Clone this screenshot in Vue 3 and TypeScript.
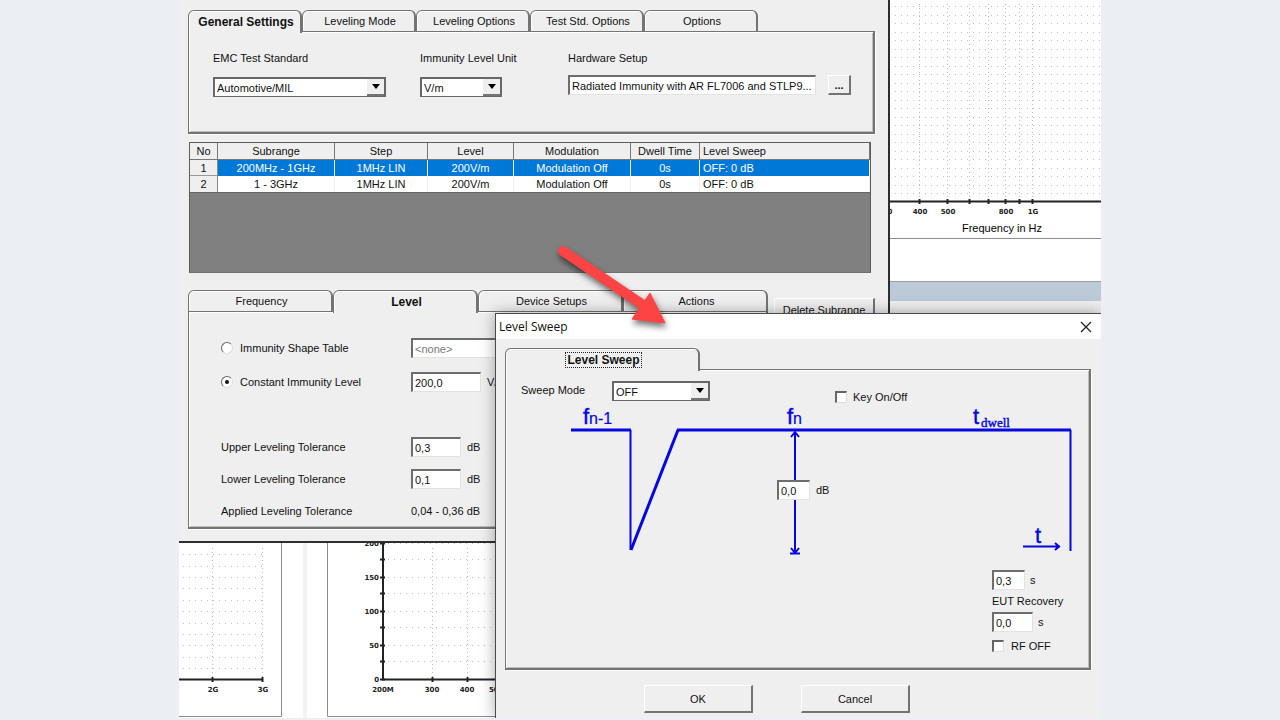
<script setup lang="ts">
import { ref } from 'vue'

const mainTabs: string[] = ['General Settings', 'Leveling Mode', 'Leveling Options', 'Test Std. Options', 'Options']
const rangeTabs: string[] = ['Frequency', 'Level', 'Device Setups', 'Actions']
const activeMain = ref('General Settings')
const activeRange = ref('Level')

const columns: string[] = ['No', 'Subrange', 'Step', 'Level', 'Modulation', 'Dwell Time', 'Level Sweep']
const subranges: string[][] = [
  ['1', '200MHz - 1GHz', '1MHz LIN', '200V/m', 'Modulation Off', '0s', 'OFF: 0 dB'],
  ['2', '1 - 3GHz', '1MHz LIN', '200V/m', 'Modulation Off', '0s', 'OFF: 0 dB'],
]
const selectedRow = ref(0)

const standard = ref('Automotive/MIL')
const unit = ref('V/m')
const hardware = ref('Radiated Immunity with AR FL7006 and STLP9...')
const levelSource = ref('constant')
const shapeTable = ref('<none>')
const level = ref('200,0')
const upper = ref('0,3')
const lower = ref('0,1')

const sweepMode = ref('OFF')
const keyOnOff = ref(false)
const sweepDepth = ref('0,0')
const rampTime = ref('0,3')
const recovery = ref('0,0')
const rfOff = ref(false)

const freqRows: number[] = Array.from({ length: 23 }, (_, i) => 6 + Math.round(i * 8.5))
const freqTicks: number[] = [30, 58, 80, 99, 116, 130, 143]
const freqLabels = [
  { x: 0, t: '0' },
  { x: 30, t: '400' },
  { x: 58, t: '500' },
  { x: 116, t: '800' },
  { x: 143, t: '1G' },
]
const leftRows: number[] = [11, 23, 34, 45, 57, 68, 80, 91, 102, 114, 125]
const fieldTicks: number[] = [0, 16, 34, 50, 68, 84, 102, 118, 136]
const fieldLabels = [
  { y: 3, t: '200' },
  { y: 37, t: '150' },
  { y: 71, t: '100' },
  { y: 105, t: '50' },
  { y: 139, t: '0' },
]
</script>

<template>
  <main class="page">
    <div class="desktop">
      <section class="backdrop">
        <div class="spectrum">
          <svg class="spectrum-chart" width="212" height="239">
            <g class="dots">
              <line v-for="y in freqRows" :key="y" x1="5" x2="212" :y1="y + 0.5" :y2="y + 0.5" stroke-dasharray="1 5" />
              <line v-for="x in freqTicks" :key="x" :x1="x - 0.5" :x2="x - 0.5" y1="4" y2="198" stroke-dasharray="1 3" />
            </g>
            <path class="axis" d="M0 201.5H212" />
            <path v-for="x in freqTicks" :key="x" class="axis" :d="`M${x - 0.5} 199V204`" />
            <text v-for="l in freqLabels" :key="l.t" class="tick" :x="l.x" y="214" text-anchor="middle">{{ l.t }}</text>
            <text class="axis-title" x="112" y="232" text-anchor="middle">Frequency in Hz</text>
            <path class="rule" d="M0 238.5H212" />
          </svg>
          <div class="blank"></div>
          <div class="band"></div>
        </div>
        <div class="plots">
          <svg width="104" height="175">
            <g class="dots">
              <line v-for="y in leftRows" :key="y" x1="4" x2="84" :y1="y + 0.5" :y2="y + 0.5" stroke-dasharray="1 5" />
              <line v-for="x in [33, 83]" :key="x" :x1="x + 0.5" :x2="x + 0.5" y1="5" y2="134" stroke-dasharray="1 3" />
            </g>
            <path class="axis" d="M0 136.5H84M33.5 134V139M83.5 134V139" />
            <text class="tick" x="34" y="149" text-anchor="middle">2G</text>
            <text class="tick" x="84" y="149" text-anchor="middle">3G</text>
            <path class="rule" d="M0 173.5H102.5V0" />
          </svg>
          <div class="gutter"></div>
          <svg width="169" height="175">
            <path class="rule" d="M0.5 0V173.5H169" />
            <g class="dots">
              <line v-for="y in fieldTicks" :key="y" x1="61" x2="169" :y1="y + 0.5" :y2="y + 0.5" stroke-dasharray="1 5" />
              <line v-for="x in [105, 140]" :key="x" :x1="x + 0.5" :x2="x + 0.5" y1="5" y2="134" stroke-dasharray="1 3" />
            </g>
            <path class="axis" d="M56 0V137M55 136.5H169M105.5 134V139M140.5 134V139" />
            <path v-for="y in fieldTicks" :key="y" class="axis" :d="`M53 ${y + 0.5}H58`" />
            <text v-for="l in fieldLabels" :key="l.t" class="tick" x="52" :y="l.y" text-anchor="end">{{ l.t }}</text>
            <text class="tick" x="56" y="149" text-anchor="middle">200M</text>
            <text class="tick" x="105" y="149" text-anchor="middle">300</text>
            <text class="tick" x="140" y="149" text-anchor="middle">400</text>
            <text class="tick" x="162" y="149">500</text>
          </svg>
        </div>
      </section>

      <section class="window settings" aria-label="Settings">
        <div class="tabs main-tabs" role="tablist">
          <button v-for="t in mainTabs" :key="t" type="button" role="tab" class="tab" :class="{ active: t === activeMain }" :aria-selected="t === activeMain" @click="activeMain = t">{{ t }}</button>
        </div>
        <div class="panel general">
          <div class="field">
            <label for="standard">EMC Test Standard</label>
            <span class="combo">
              <select id="standard" v-model="standard"><option>Automotive/MIL</option></select>
              <i class="drop"><svg width="8" height="5"><path d="M0 0H8L4 5Z" /></svg></i>
            </span>
          </div>
          <div class="field">
            <label for="unit">Immunity Level Unit</label>
            <span class="combo unit">
              <select id="unit" v-model="unit"><option>V/m</option></select>
              <i class="drop"><svg width="8" height="5"><path d="M0 0H8L4 5Z" /></svg></i>
            </span>
          </div>
          <div class="field close-set">
            <label for="hardware">Hardware Setup</label>
            <div class="hardware">
              <input id="hardware" v-model="hardware" type="text" />
              <button type="button" class="push more">...</button>
            </div>
          </div>
        </div>

        <div class="grid-box">
          <table>
            <colgroup>
              <col class="c-no" /><col class="c-wide" /><col class="c-step" /><col class="c-level" /><col class="c-wide" /><col class="c-dwell" /><col />
            </colgroup>
            <thead>
              <tr><th v-for="c in columns" :key="c" scope="col">{{ c }}</th></tr>
            </thead>
            <tbody>
              <tr v-for="(row, i) in subranges" :key="i" :class="{ selected: i === selectedRow }" @click="selectedRow = i">
                <td v-for="(cell, j) in row" :key="j">{{ cell }}</td>
              </tr>
            </tbody>
          </table>
        </div>

        <div class="lower">
          <div class="range">
            <div class="tabs range-tabs" role="tablist">
              <button v-for="t in rangeTabs" :key="t" type="button" role="tab" class="tab" :class="{ active: t === activeRange }" :aria-selected="t === activeRange" @click="activeRange = t">{{ t }}</button>
            </div>
            <div class="panel level-panel">
              <div class="row source">
                <label class="choice"><input v-model="levelSource" type="radio" name="source" value="table" />Immunity Shape Table</label>
                <input v-model="shapeTable" class="shape" type="text" disabled aria-label="Shape table" />
              </div>
              <div class="row source">
                <label class="choice"><input v-model="levelSource" type="radio" name="source" value="constant" />Constant Immunity Level</label>
                <input v-model="level" class="level" type="text" aria-label="Constant level" />
                <span>V/m</span>
              </div>
              <div class="row first">
                <label for="upper">Upper Leveling Tolerance</label>
                <input id="upper" v-model="upper" class="short" type="text" />
                <span>dB</span>
              </div>
              <div class="row">
                <label for="lower">Lower Leveling Tolerance</label>
                <input id="lower" v-model="lower" class="short" type="text" />
                <span>dB</span>
              </div>
              <div class="row">
                <span>Applied Leveling Tolerance</span>
                <output>0,04 - 0,36 dB</output>
              </div>
            </div>
          </div>
          <button type="button" class="push delete">Delete Subrange</button>
        </div>
      </section>

      <section class="window dialog" role="dialog" aria-labelledby="dialog-title">
        <header class="titlebar">
          <h1 id="dialog-title">Level Sweep</h1>
          <button type="button" class="close" aria-label="Close">
            <svg width="12" height="12"><path d="M1 1L11 11M11 1L1 11" /></svg>
          </button>
        </header>
        <div class="dialog-body">
          <div class="tabs" role="tablist">
            <button type="button" role="tab" class="tab active sweep-tab" aria-selected="true"><span>Level Sweep</span></button>
          </div>
          <div class="panel">
            <div class="toolbar">
              <label for="mode">Sweep Mode</label>
              <span class="combo mode">
                <select id="mode" v-model="sweepMode"><option>OFF</option></select>
                <i class="drop"><svg width="8" height="5"><path d="M0 0H8L4 5Z" /></svg></i>
              </span>
              <label class="check key"><input v-model="keyOnOff" type="checkbox" />Key On/Off</label>
            </div>
            <div class="diagram">
              <svg width="583" height="156">
                <g class="trace">
                  <path d="M65 26H125M171 26H565" />
                  <path class="side" d="M124.500 26V146M564.500 26V147" />
                  <path class="ramp" d="M125 146L172 26" />
                  <path class="thin" d="M289 28V148M285 33L289 28L293 33M285 144L289 149L293 144M284 149.500H294" />
                  <path class="thin" d="M517 142.500H554M549 139L553 142.500L549 146" />
                </g>
                <g class="symbols">
                  <text x="77" y="20">f</text><text class="sub" x="83" y="20">n-1</text>
                  <text x="281" y="20">f</text><text class="sub" x="287" y="20">n</text>
                  <text x="467" y="20">t</text><text class="serif" x="475" y="23">dwell</text>
                  <text x="529" y="139">t</text>
                </g>
              </svg>
              <label class="depth"><input v-model="sweepDepth" class="tiny" type="text" />dB</label>
            </div>
            <div class="timing">
              <label><input v-model="rampTime" class="tiny" type="text" />s</label>
              <label class="caption" for="recovery">EUT Recovery</label>
              <div class="recovery"><input id="recovery" v-model="recovery" type="text" />s</div>
              <label class="check"><input v-model="rfOff" type="checkbox" />RF OFF</label>
            </div>
          </div>
          <footer class="actions">
            <button type="button" class="push">OK</button>
            <button type="button" class="push">Cancel</button>
          </footer>
        </div>
      </section>

      <svg class="pointer" width="124" height="92" aria-hidden="true">
        <path class="shaft" d="M10 9L90 63" />
        <path class="head" d="M97 51L79 77L112 81Z" />
      </svg>
    </div>
  </main>
</template>

<style>
body {
  background: #ebeff3;
}
</style>

<style scoped>
.page {
  min-height: 100vh;
  background: #ebeff3;
  color: #111;
  font: 11px/16px "Liberation Sans", Arial, sans-serif;
}
.desktop {
  position: relative;
  max-width: 922px;
  margin: 0 auto;
  overflow: hidden;
  background: #fff;
}
svg {
  display: block;
}
button,
input,
select {
  box-sizing: border-box;
  margin: 0;
  font: inherit;
  color: inherit;
}

/* background plots */
.spectrum {
  height: 543px;
  margin-left: 710px;
}
.spectrum-chart {
  margin-left: 1px;
}
.blank {
  height: 42px;
}
.band {
  height: 19px;
  background: #bccad8;
  border-top: 1px solid #9a9fa4;
  border-bottom: 12px solid #efefef;
}
.plots {
  display: flex;
}
.gutter {
  width: 44px;
  background: linear-gradient(90deg, #fff 20px, #f3f3f3 20px, #f3f3f3 24px, #fff 24px);
}
.dots line {
  stroke: #bdbdbd;
}
.axis {
  fill: none;
  stroke: #222;
  stroke-width: 2;
}
.rule {
  fill: none;
  stroke: #8c8c8c;
}
.tick {
  font: bold 7px "DejaVu Sans", sans-serif;
  fill: #222;
}
.axis-title {
  font-size: 11px;
}

/* windows */
.window {
  position: absolute;
  box-sizing: border-box;
  background: #efefef;
}
.settings {
  top: 0;
  left: 0;
  right: 211px;
  height: 543px;
  padding: 10px 13px 0 9px;
  border-right: 2px solid #2e2e2e;
  border-bottom: 2px solid #2e2e2e;
}
.tabs {
  display: flex;
  align-items: flex-start;
}
.tab {
  height: 21px;
  padding: 0 0 0 3px;
  border: solid #747474;
  border-width: 1px 2px 0 1px;
  border-radius: 6px 6px 0 0;
  background: #efefef;
  box-shadow: inset 1px 1px #fff;
  white-space: nowrap;
}
.tab.active {
  position: relative;
  z-index: 1;
  height: 23px;
  font: bold 12px/16px "Liberation Sans", Arial, sans-serif;
}
.main-tabs .tab {
  width: 114px;
}
.range-tabs .tab {
  width: 145px;
}
.panel {
  margin-top: -2px;
  border: solid #747474;
  border-width: 1px 2px 2px 1px;
  box-shadow: inset 1px 1px #fff, inset -1px -1px #bdbdbd, 1px 1px #fff;
}
.general {
  display: grid;
  grid-template-columns: 207px 148px 1fr;
  height: 82px;
  padding: 18px 22px 0 24px;
}
.field {
  display: flex;
  flex-direction: column;
  align-items: flex-start;
  gap: 11px;
}
.field.close-set {
  gap: 9px;
}
.combo {
  display: grid;
  box-sizing: border-box;
  width: 173px;
  height: 20px;
  border: solid #686868;
  border-width: 2px 2px 1px 2px;
  background: #fff;
}
.combo.unit {
  width: 82px;
}
.combo.mode {
  width: 98px;
}
.combo select,
.combo .drop {
  grid-area: 1 / 1;
}
.combo select {
  appearance: none;
  width: 100%;
  height: 17px;
  padding: 0 18px 0 2px;
  border: 0;
  background: transparent;
}
.drop {
  display: grid;
  place-items: center;
  justify-self: end;
  box-sizing: border-box;
  width: 17px;
  background: #efefef;
  border-bottom: 2px solid #747474;
  pointer-events: none;
}
input[type="text"] {
  height: 20px;
  padding: 0 2px;
  border: solid #6d6d6d;
  border-width: 2px 1px 1px 2px;
  border-right-color: #e2e2e2;
  border-bottom-color: #e2e2e2;
  background: #fff;
}
input[type="text"]:disabled {
  color: #777;
}
.hardware {
  display: flex;
  gap: 12px;
  width: 100%;
}
.hardware input {
  flex: 1;
  min-width: 0;
}
.push {
  padding: 0;
  border: solid #747474;
  border-width: 1px 2px 2px 1px;
  border-top-color: #fff;
  border-left-color: #fff;
  background: #efefef;
}
.more {
  width: 23px;
  font-weight: bold;
  line-height: 14px;
}

/* subrange table */
.grid-box {
  box-sizing: border-box;
  height: 131px;
  margin: 8px 4px 0 1px;
  border: 1px solid #5c5c5c;
  border-bottom-color: #707070;
  background: #808080;
}
table {
  width: 100%;
  border-spacing: 0;
  table-layout: fixed;
  border-bottom: 1px solid #666;
}
.c-no { width: 28px; }
.c-wide { width: 117px; }
.c-step { width: 93px; }
.c-level { width: 86px; }
.c-dwell { width: 69px; }
th,
td {
  height: 16px;
  padding: 0;
  overflow: hidden;
  font-weight: normal;
  line-height: 16px;
  text-align: center;
  white-space: nowrap;
}
th {
  border-right: 1px solid #777;
  border-bottom: 1px solid #777;
  background: #efefef;
}
td {
  border-right: 1px solid #eee;
  background: #fff;
}
td:first-child {
  border-right-color: #888;
  background: #efefef;
}
.selected td:first-child {
  box-shadow: inset 0 -1px #999;
}
th:last-child,
td:last-child {
  padding-left: 3px;
  text-align: left;
}
.selected td:not(:first-child) {
  background: #0078d7;
  color: #fff;
}

/* level settings */
.lower {
  display: flex;
  gap: 6px;
  margin-top: 17px;
}
.range {
  flex: 0 0 580px;
}
.level-panel {
  padding: 19px 0 0 32px;
}
.row {
  display: flex;
  align-items: center;
  height: 32px;
}
.row.source {
  height: 34px;
}
.row.first {
  margin-top: 32px;
}
.row > :first-child {
  flex: 0 0 190px;
}
.row > span:last-child {
  margin-left: 6px;
}
.choice {
  display: flex;
  align-items: center;
  gap: 7px;
}
.choice input {
  display: grid;
  place-items: center;
  appearance: none;
  width: 12px;
  height: 12px;
  border: 1px solid #666;
  border-right-color: #ddd;
  border-bottom-color: #ddd;
  border-radius: 50%;
  background: #fff;
}
.choice input:checked::before {
  content: "";
  width: 4px;
  height: 4px;
  border-radius: 50%;
  background: #111;
}
.shape { width: 140px; }
.level { width: 70px; }
.short { width: 50px; }
.delete {
  flex: 1;
  height: 24px;
  margin-top: 8px;
}

/* level sweep dialog */
.dialog {
  top: 313px;
  left: 316px;
  right: 0;
  bottom: 0;
  border: solid #4a4a4a;
  border-width: 1px 0 0 1px;
  box-shadow: 0 0 14px rgba(0, 0, 0, 0.35);
}
.titlebar {
  display: flex;
  align-items: center;
  justify-content: space-between;
  height: 25px;
  padding: 0 9px 0 3px;
  background: #fff;
}
h1 {
  margin: 0;
  font: 12px/16px "Open Sans", "Noto Sans", sans-serif;
}
.close {
  padding: 0;
  border: 0;
  background: none;
}
.close path {
  stroke: #222;
  stroke-width: 1.3;
}
.dialog-body {
  padding: 9px 10px 0 9px;
}
.sweep-tab {
  width: 195px;
}
.sweep-tab span {
  display: inline-block;
  padding: 0 1px;
  border: 1px dotted #222;
  line-height: 14px;
}
.toolbar {
  display: flex;
  align-items: flex-start;
  box-sizing: border-box;
  height: 34px;
  padding: 11px 0 0 15px;
}
.toolbar > :first-child {
  flex: 0 0 91px;
  line-height: 18px;
}
.check {
  display: flex;
  align-items: center;
  gap: 6px;
}
.check input {
  appearance: none;
  width: 12px;
  height: 12px;
  border: solid #666;
  border-width: 2px 1px 1px 2px;
  border-right-color: #ddd;
  border-bottom-color: #ddd;
  background: #fff;
}
.check input:checked {
  background: #444;
}
.key {
  align-self: flex-end;
  height: 14px;
  margin-left: 125px;
}
.diagram {
  position: relative;
}
.trace {
  fill: none;
  stroke: #0606e0;
  stroke-width: 3;
}
.trace .side,
.trace .thin {
  stroke-width: 2;
}
.symbols {
  fill: #0606e0;
  stroke: #0606e0;
  stroke-width: 0.4;
  font: 22px "Liberation Sans", Arial, sans-serif;
}
.symbols .sub {
  stroke-width: 0.2;
  font-size: 16px;
}
.symbols .serif {
  font: 13px "Liberation Serif", serif;
}
.depth {
  position: absolute;
  top: 76px;
  left: 271px;
  display: flex;
  align-items: center;
  gap: 6px;
}
.tiny {
  width: 33px;
}
.timing {
  width: 97px;
  margin: 10px 0 0 auto;
  padding-bottom: 9px;
}
.timing > * {
  display: flex;
  align-items: center;
  gap: 5px;
}
.timing .caption {
  height: 22px;
}
.recovery input {
  width: 41px;
}
.timing .check {
  height: 27px;
  gap: 7px;
}
.actions {
  display: flex;
  gap: 48px;
  padding: 15px 0 5px 139px;
}
.actions .push {
  width: 109px;
  height: 28px;
}

/* callout arrow */
.pointer {
  position: absolute;
  top: 242px;
  left: 374px;
  overflow: visible;
  filter: drop-shadow(1px 4px 3px rgba(0, 0, 0, 0.55));
  pointer-events: none;
}
.shaft {
  stroke: #fd4444;
  stroke-width: 10;
  stroke-linecap: round;
}
.head {
  fill: #fd4444;
  stroke: #fd4444;
}
</style>
